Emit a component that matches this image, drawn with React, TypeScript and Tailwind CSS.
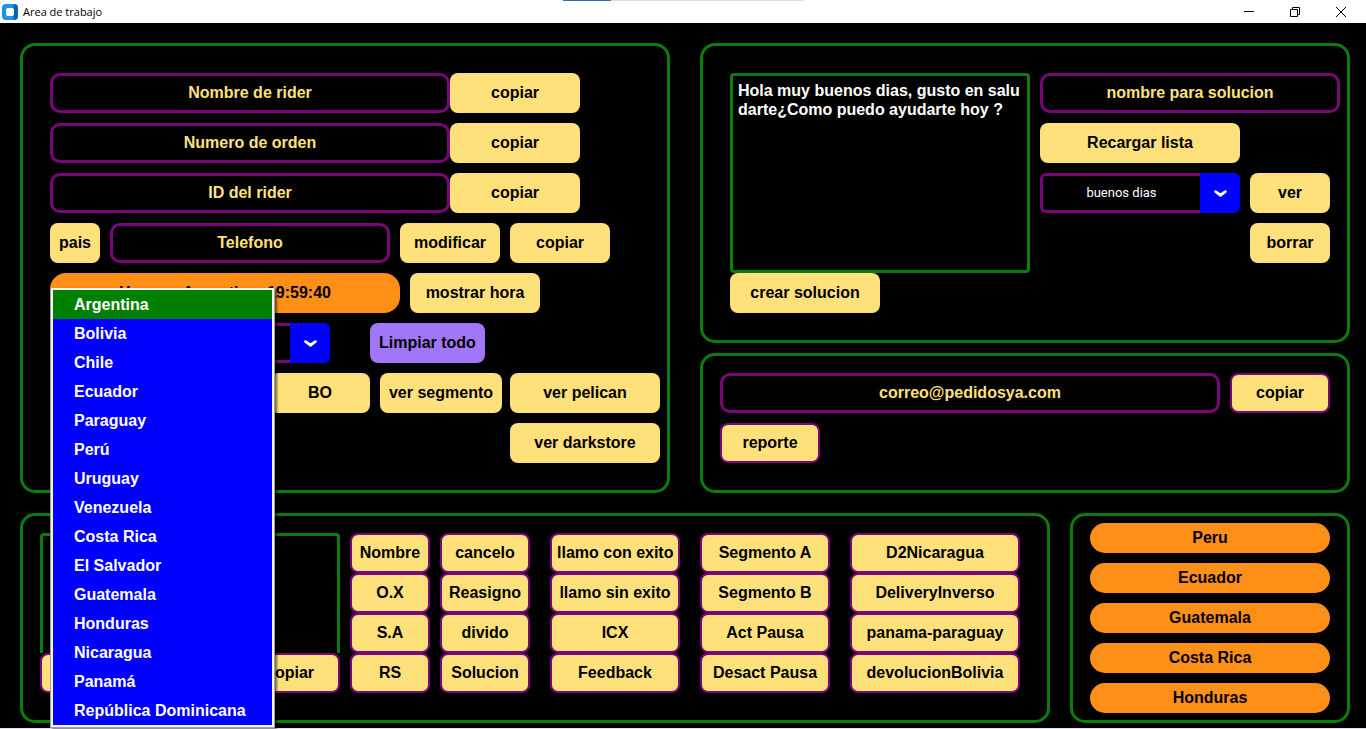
import { useState, type ReactNode } from "react";
import { clsx } from "clsx";

const COUNTRIES = [
  "Argentina",
  "Bolivia",
  "Chile",
  "Ecuador",
  "Paraguay",
  "Perú",
  "Uruguay",
  "Venezuela",
  "Costa Rica",
  "El Salvador",
  "Guatemala",
  "Honduras",
  "Nicaragua",
  "Panamá",
  "República Dominicana",
];

const SHORTCUTS = [
  { width: "w-20", gap: "ml-2.5", items: ["Nombre", "O.X", "S.A", "RS"] },
  { width: "w-[90px]", gap: "ml-2.5", items: ["cancelo", "Reasigno", "divido", "Solucion"] },
  { width: "w-[130px]", gap: "ml-5", items: ["llamo con exito", "llamo sin exito", "ICX", "Feedback"] },
  { width: "w-[130px]", gap: "ml-5", items: ["Segmento A", "Segmento B", "Act Pausa", "Desact Pausa"] },
  { width: "w-[170px]", gap: "ml-5", items: ["D2Nicaragua", "DeliveryInverso", "panama-paraguay", "devolucionBolivia"] },
];

const CLOCKS = ["Peru", "Ecuador", "Guatemala", "Costa Rica", "Honduras"];

type ButtonProps = { children?: ReactNode; className?: string; outlined?: boolean; label?: string };

function Button({ children, className, outlined, label }: ButtonProps) {
  return (
    <button
      type="button"
      aria-label={label}
      className={clsx(
        "h-10 shrink-0 rounded-lg bg-[#ffe17c] text-center whitespace-nowrap text-black",
        outlined && "border-2 border-[#7a067a]",
        className,
      )}
    >
      {children}
    </button>
  );
}

function Field({ label, className }: { label: string; className: string }) {
  return (
    <input
      type="text"
      aria-label={label}
      placeholder={label}
      className={clsx(
        "h-10 rounded-[10px] border-3 border-[#7a067a] bg-black text-center text-[#ffe17c] outline-none placeholder:text-[#ffe17c] placeholder:opacity-100",
        className,
      )}
    />
  );
}

type ComboProps = { label: string; options: string[]; className: string; children?: ReactNode };

function Combo({ label, options, className, children }: ComboProps) {
  return (
    <div className={clsx("relative flex h-10 shrink-0", className)}>
      <select
        aria-label={label}
        className="min-w-0 flex-1 appearance-none rounded-l-md border-3 border-r-0 border-[#7a067a] bg-black text-center font-['Roboto',sans-serif] text-[13px] font-normal text-white outline-none"
      >
        {options.map((option) => (
          <option key={option}>{option}</option>
        ))}
      </select>
      <span className="flex w-10 items-center justify-center rounded-r-md bg-[#0000ff]">
        <svg width="13" height="7" viewBox="0 0 13 7" fill="white" aria-hidden="true">
          <path d="M0 1.4Q.8-.2 2.4.4L6.5 3.2 10.600 .4Q12.200-.2 13 1.400L12.400 2.600 7.300 6.500Q6.500 7.100 5.700 6.500L.6 2.600Z" />
        </svg>
      </span>
      {children}
    </div>
  );
}

function Panel({ children, className }: { children: ReactNode; className: string }) {
  return <section className={clsx("rounded-[15px] border-3 border-[#0a7e0a]", className)}>{children}</section>;
}

function TitleBar() {
  return (
    <header className="relative flex h-[23px] items-center bg-white text-black">
      <svg className="ml-0.5 size-4" viewBox="0 0 16 16" aria-hidden="true">
        <rect width="16" height="16" rx="4" fill="#1a94f0" />
        <path d="M12 0Q16 0 16 4V12Q16 16 12 16L11 11V5Z" fill="#0763b5" />
        <rect x="4" y="4" width="8" height="8" rx="2" fill="white" />
      </svg>
      <h1 className="ml-[5px] flex-1 font-['Open_Sans',sans-serif] text-[11px] font-normal">Area de trabajo</h1>
      <div className="absolute top-0 left-[563px] flex h-px w-[241px] bg-[#dedede]">
        <span className="w-12 bg-[#2b6cab]" />
      </div>
      <div className="flex h-full text-black">
        <button type="button" aria-label="Minimizar" className="flex w-[46px] items-center justify-center">
          <svg width="10" height="10" viewBox="0 0 10 10" stroke="currentColor" aria-hidden="true">
            <path d="M0 4.5H10" />
          </svg>
        </button>
        <button type="button" aria-label="Restaurar" className="flex w-[46px] items-center justify-center">
          <svg width="10" height="10" viewBox="0 0 10 10" fill="none" stroke="currentColor" aria-hidden="true">
            <path d="M.5 2.5H7.5V9.5H.5ZM2.5 2.5V.5H9.5V7.5H7.5" />
          </svg>
        </button>
        <button type="button" aria-label="Cerrar" className="mr-0.5 flex w-[46px] items-center justify-center">
          <svg width="10" height="10" viewBox="0 0 10 10" stroke="currentColor" aria-hidden="true">
            <path d="M0 0 10 10M10 0 0 10" />
          </svg>
        </button>
      </div>
    </header>
  );
}

function CountryMenu() {
  const [selected, setSelected] = useState("Argentina");
  return (
    <ul
      role="listbox"
      aria-label="Paises"
      className="absolute -top-[35px] left-0 z-10 w-[225px] border border-t-0 border-[#a0a0a0] bg-[#f4f4f4] p-0.5 text-white shadow-[2px_1px_2px_#0008]"
    >
      {COUNTRIES.map((country) => (
        <li
          key={country}
          role="option"
          aria-selected={country === selected}
          onMouseEnter={() => setSelected(country)}
          className={clsx(
            "h-[29px] pl-[21px] leading-[29px] whitespace-nowrap",
            country === selected ? "bg-[#008000]" : "bg-[#0000ff]",
          )}
        >
          {country}
        </li>
      ))}
    </ul>
  );
}

function RiderPanel() {
  return (
    <Panel className="flex min-w-0 flex-col gap-2.5 py-[27px] pr-[7px] pl-[27px]">
      {["Nombre de rider", "Numero de orden", "ID del rider"].map((label) => (
        <div key={label} className="flex">
          <Field label={label} className="w-[400px]" />
          <Button className="w-[130px]">copiar</Button>
        </div>
      ))}
      <div className="flex gap-2.5">
        <Button className="w-[50px]">pais</Button>
        <Field label="Telefono" className="w-[280px]" />
        <Button className="w-[100px]">modificar</Button>
        <Button className="w-[100px]">copiar</Button>
      </div>
      <div className="flex gap-2.5">
        <p className="flex h-10 w-[350px] items-center justify-center rounded-2xl bg-[#ff9017] text-black">
          Hora en Argentina: 19:59:40
        </p>
        <Button className="w-[130px]">mostrar hora</Button>
      </div>
      <div className="flex gap-10">
        <Combo label="Pais" options={COUNTRIES} className="w-[280px]">
          <CountryMenu />
        </Combo>
        <button type="button" className="h-10 rounded-lg bg-[#a077f8] px-[9px] text-black">
          Limpiar todo
        </button>
      </div>
      <div className="flex justify-end">
        <Button className="mr-2.5 w-[100px]">BO</Button>
        <Button className="mr-2 w-[122px]">ver segmento</Button>
        <Button className="w-[150px]">ver pelican</Button>
      </div>
      <div className="flex justify-end">
        <Button className="w-[150px]">ver darkstore</Button>
      </div>
    </Panel>
  );
}

function SolutionPanel() {
  return (
    <Panel className="flex gap-2.5 py-[27px] pr-[7px] pl-[27px]">
      <div className="flex w-[300px] shrink-0 flex-col items-start">
        <textarea
          aria-label="Solucion"
          defaultValue="Hola muy buenos dias, gusto en saludarte¿Como puedo ayudarte hoy ?"
          className="h-[200px] w-full resize-none rounded border-3 border-[#0a7e0a] bg-black p-[5px] leading-[19px] break-all text-white outline-none"
        />
        <Button className="w-[150px]">crear solucion</Button>
      </div>
      <div className="flex min-w-0 flex-1 flex-col gap-2.5">
        <Field label="nombre para solucion" className="w-full" />
        <Button className="w-[200px]">Recargar lista</Button>
        <div className="flex gap-2.5">
          <Combo label="Lista de soluciones" options={["buenos dias"]} className="w-[200px]" />
          <Button className="w-20">ver</Button>
        </div>
        <div className="flex justify-end pr-2.5">
          <Button className="w-20">borrar</Button>
        </div>
      </div>
    </Panel>
  );
}

function MailPanel() {
  return (
    <Panel className="flex flex-1 flex-col gap-2.5 p-[17px]">
      <div className="flex gap-2.5">
        <Field label="correo@pedidosya.com" className="min-w-0 flex-1" />
        <Button outlined className="w-[100px]">
          copiar
        </Button>
      </div>
      <Button outlined className="w-[100px]">
        reporte
      </Button>
    </Panel>
  );
}

export default function App() {
  return (
    <div className="bg-black font-['Liberation_Sans',Arial,sans-serif] text-base leading-5 font-bold">
      <TitleBar />
      <main className="flex flex-col gap-5 pt-5 pr-4 pb-[5px] pl-5">
        <div className="grid grid-cols-2 gap-[30px]">
          <RiderPanel />
          <div className="flex min-w-0 flex-col gap-2.5">
            <SolutionPanel />
            <MailPanel />
          </div>
        </div>
        <div className="flex gap-5">
          <Panel className="flex flex-1 items-start p-[17px]">
            <div className="flex w-[300px] flex-col">
              <textarea
                aria-label="Notas"
                className="h-[120px] resize-none rounded-t border-3 border-b-0 border-[#0a7e0a] bg-black p-1.5 text-white outline-none"
              />
              <div className="flex justify-between">
                <Button outlined label="Limpiar" className="w-[100px]" />
                <Button outlined className="w-[100px]">
                  copiar
                </Button>
              </div>
            </div>
            {SHORTCUTS.map((column) => (
              <div key={column.items[0]} className={clsx("flex flex-col items-start", column.width, column.gap)}>
                {column.items.map((item) => (
                  <Button key={item} outlined className="min-w-full px-[5px]">
                    {item}
                  </Button>
                ))}
              </div>
            ))}
          </Panel>
          <Panel className="flex w-[280px] flex-col gap-2.5 px-[17px] py-[7px]">
            {CLOCKS.map((country) => (
              <button key={country} type="button" className="h-[30px] rounded-full bg-[#ff9017] text-black">
                {country}
              </button>
            ))}
          </Panel>
        </div>
      </main>
      <footer className="h-px bg-[#e6e1ea]" />
    </div>
  );
}
